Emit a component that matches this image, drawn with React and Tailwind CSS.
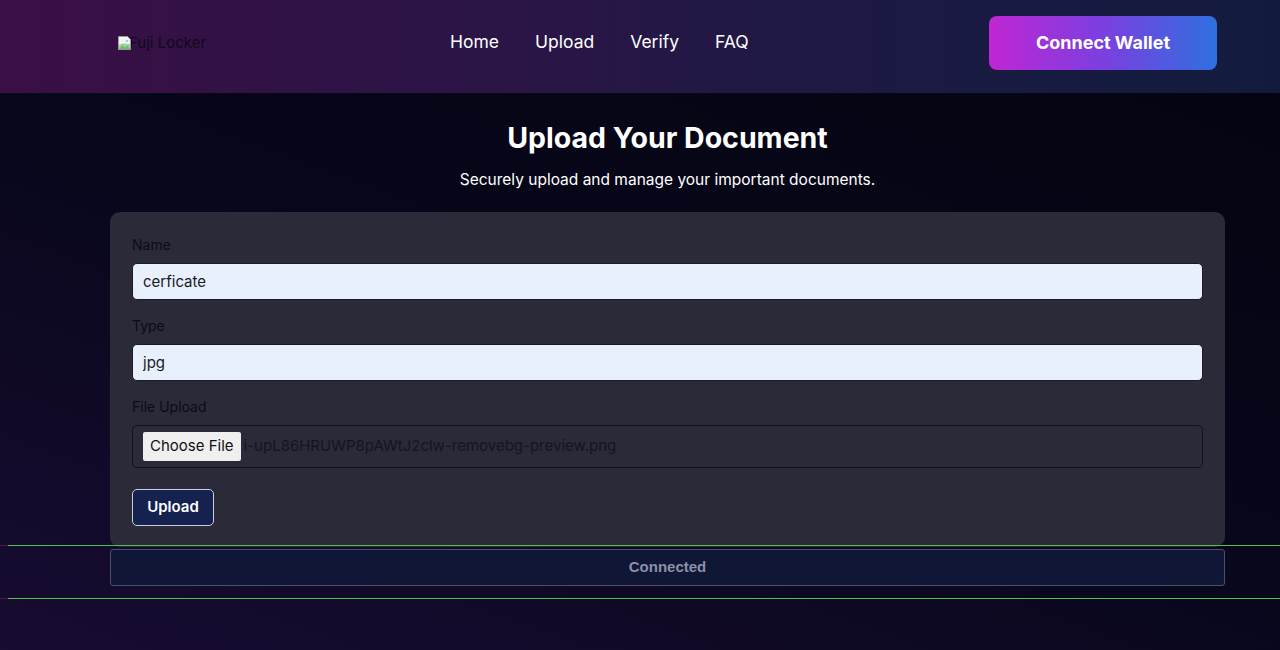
import { useState } from 'react'

const font = { fontFamily: 'Inter, "Noto Sans", sans-serif' }

function BrokenImage() {
  return (
    <svg width="16" height="16" viewBox="0 0 16 16" className="absolute left-0 top-0">
      <path d="M1.5 1.5h9l3 3v10h-12z" fill="#f4f4f4" stroke="#9a9a9a" />
      <path d="M2 14l3.5-4 2.5 2.5 2-2 3.5 3.5z" fill="#4caf50" />
      <path d="M2 10c2-1.5 5-2 11-1v5H2z" fill="#7cc576" opacity="0.7" />
      <circle cx="10" cy="6" r="1.3" fill="#9ecbf2" />
    </svg>
  )
}

function Field({ label, value, onChange }) {
  return (
    <div className="flex flex-col">
      <label className="mb-[9px] text-[14px] leading-[18px] text-[#0c0c14]">{label}</label>
      <input
        value={value}
        onChange={(e) => onChange(e.target.value)}
        className="h-[37px] w-full rounded-[5px] border border-[#1b1b26] bg-[#e8f0fe] px-[10px] text-[15px] text-[#1a1a1a] outline-none"
      />
    </div>
  )
}

function GuideLine() {
  return (
    <div className="flex h-px w-full">
      <div className="w-2 bg-[#5a1a2a]" />
      <div className="flex-1 bg-[#4fc14f]" />
    </div>
  )
}

export default function App() {
  const [name, setName] = useState('cerficate')
  const [type, setType] = useState('jpg')

  return (
    <div
      className="flex min-h-[650px] w-full flex-col bg-[linear-gradient(20deg,#180c32_0%,#08071c_45%,#03040f_100%)] text-white"
      style={font}
    >
      <header className="flex h-[93px] items-center justify-between bg-[linear-gradient(90deg,#3a0f45_0%,#2a1546_40%,#1b1a44_70%,#121b3d_100%)] pb-[8px] pl-[117px] pr-[63px]">
        <div className="relative w-[200px] text-[15px] leading-4 text-[#0e0a1c]">
          <BrokenImage />
          <span className="pl-[12px]">Fuji Locker</span>
        </div>
        <nav className="ml-[133px] flex items-center gap-[36px] text-[17.5px] text-white">
          <a>Home</a>
          <a>Upload</a>
          <a>Verify</a>
          <a>FAQ</a>
        </nav>
        <button className="ml-auto h-[54px] w-[228px] rounded-[8px] bg-[linear-gradient(90deg,#c026d3_0%,#7b3fe0_50%,#2f6fe0_100%)] text-[18px] font-bold text-white">
          Connect Wallet
        </button>
      </header>

      <main className="flex flex-col items-center pl-[55px]">
        <h1 className="mt-[24px] text-[28.5px] font-bold leading-[42px]">Upload Your Document</h1>
        <p className="mt-[11px] text-[15.5px] leading-5">Securely upload and manage your important documents.</p>

        <div className="mt-[22px] flex w-[1115px] flex-col gap-[17px] rounded-[10px] bg-[#2a2a38] px-[22px] pb-[21px] pt-[24px]">
          <Field label="Name" value={name} onChange={setName} />
          <Field label="Type" value={type} onChange={setType} />
          <div className="flex flex-col">
            <label className="mb-[9px] text-[14px] leading-[18px] text-[#0c0c14]">File Upload</label>
            <div className="flex h-[43px] items-center rounded-[5px] border border-[#111118] px-[10px]">
              <span className="rounded-[2px] bg-[#efefef] px-[7px] py-[3px] text-[15px] text-[#111]">Choose File</span>
              <span className="ml-[3px] text-[15px] text-[#15151d]">i-upL86HRUWP8pAWtJ2clw-removebg-preview.png</span>
            </div>
          </div>
          <div className="pt-[4px]">
            <button className="h-[37px] w-[82px] rounded-[5px] border border-[#c9cde0] bg-[#15224f] text-[15px] font-semibold text-white">
              Upload
            </button>
          </div>
        </div>
      </main>

      <div className="relative z-10 -mt-[2px]">
        <GuideLine />
        <div className="flex justify-center pb-[12px] pl-[55px] pt-[3px]">
          <div
            className="flex h-[37px] w-[1115px] items-center justify-center rounded-[3px] border border-[#4b5068] bg-[#0f1636] text-[15px] font-bold text-[#8b90a6]"
            style={{ fontFamily: '"Liberation Sans", Arial, sans-serif' }}
          >
            Connected
          </div>
        </div>
        <GuideLine />
      </div>
    </div>
  )
}
